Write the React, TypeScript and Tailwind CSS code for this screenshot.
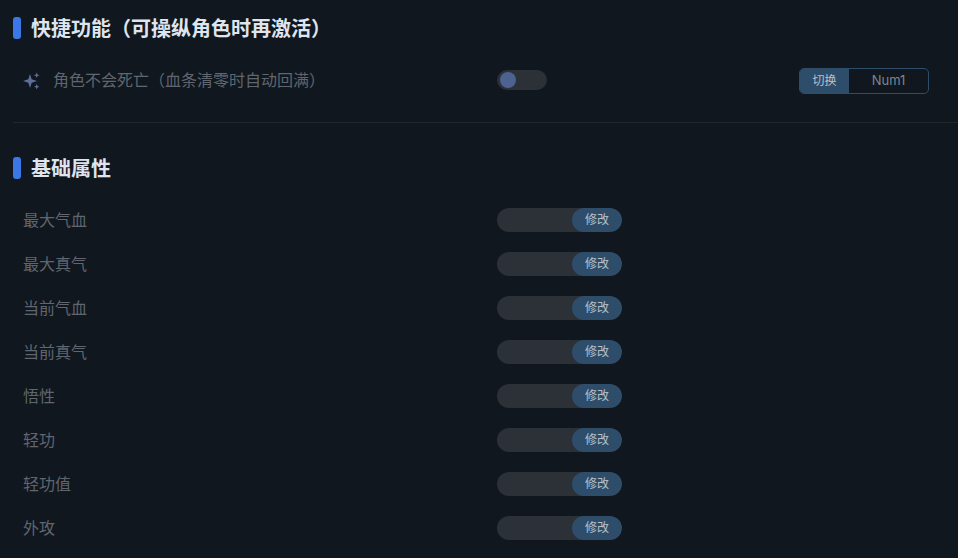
import { useState } from 'react';

const STATS = ['最大气血', '最大真气', '当前气血', '当前真气', '悟性', '轻功', '轻功值', '外攻'];

function SectionTitle({ title }: { title: string }) {
  return (
    <div className="flex items-center h-[22px]">
      <div className="w-2 h-[22px] rounded-[3px] bg-[#3b78e7] shrink-0" />
      <h2 className="ml-[10px] mt-[2px] text-[20px] leading-[22px] font-semibold text-[#dfe5ee] whitespace-nowrap">{title}</h2>
    </div>
  );
}

function Sparkles() {
  return (
    <svg viewBox="0 0 18 18" className="w-[18px] h-[18px] shrink-0" fill="#5d6f9a">
      <path d="M8 2 9.7 7.3 15 9 9.7 10.7 8 16 6.3 10.7 1 9 6.3 7.3Z" />
      <path d="M14.7 0.4 15.5 2.4 17.5 3.2 15.5 4 14.7 6 13.9 4 11.9 3.2 13.9 2.4Z" />
      <path d="M14.7 12 15.5 13.9 17.4 14.7 15.5 15.5 14.7 17.4 13.9 15.5 12 14.7 13.9 13.9Z" />
    </svg>
  );
}

function StatRow({ label }: { label: string }) {
  return (
    <div className="flex items-center h-6 mb-5">
      <span className="w-[484px] pl-[10px] text-[16px] text-[#5f6670]">{label}</span>
      <div className="flex w-[125px] h-6 rounded-full bg-[#2c3037] overflow-hidden">
        <div className="flex-1" />
        <button className="w-[50px] h-6 rounded-full bg-[#2e4d6b] text-[12px] text-[#b8c0ca]">修改</button>
      </div>
    </div>
  );
}

export default function App() {
  const [immortal] = useState(false);

  return (
    <div
      className="w-[958px] h-[558px] overflow-hidden bg-[#11171e] pl-[13px] pt-[17px]"
      style={{ fontFamily: 'Inter, "Noto Sans CJK SC", sans-serif' }}
    >
      {/* 快捷功能 */}
      <SectionTitle title="快捷功能（可操纵角色时再激活）" />
      <div className="flex items-center h-[26px] mt-[29px]">
        <div className="flex items-center w-[484px] pl-[9px] gap-[13px]">
          <Sparkles />
          <span className="mb-[2px] text-[16px] text-[#5f6670] whitespace-nowrap">角色不会死亡（血条清零时自动回满）</span>
        </div>
        <div className={`flex items-center w-[50px] h-5 mb-[2px] rounded-full bg-[#2c3037] pl-[3px] ${immortal ? 'justify-end' : ''}`}>
          <div className="w-4 h-4 rounded-full bg-[#4d6290]" />
        </div>
        <div className="flex ml-[252px] w-[130px] h-[26px] rounded-[5px] border border-[#2e4d6b] overflow-hidden">
          <div className="flex items-center justify-center w-[49px] bg-[#2e4d6b] text-[12px] text-[#b8c0ca]">切换</div>
          <div className="flex items-center justify-center flex-1 text-[13px] text-[#7c8594]">Num1</div>
        </div>
      </div>

      <div className="h-px bg-[#22282a] mt-[28px] mb-[34px]" />

      {/* 基础属性 */}
      <SectionTitle title="基础属性" />
      <div className="mt-[29px]">
        {STATS.map((s) => (
          <StatRow key={s} label={s} />
        ))}
      </div>
    </div>
  );
}
